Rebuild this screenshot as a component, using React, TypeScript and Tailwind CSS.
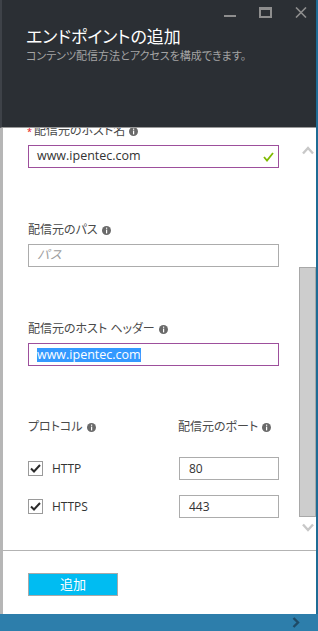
import React from 'react';

const InfoIcon = () => (
  <svg width="9" height="9" viewBox="0 0 9 9" className="inline-block ml-[4px]">
    <circle cx="4.5" cy="4.5" r="4.5" fill="#6a6a6a" />
    <rect x="4" y="1.6" width="1.2" height="1.2" fill="#fff" />
    <rect x="4" y="3.6" width="1.2" height="3.8" fill="#fff" />
  </svg>
);

const Check = () => (
  <svg width="11" height="9" viewBox="0 0 11 9">
    <polyline points="1,4.5 4,7.5 10,1" fill="none" stroke="#2b2b2b" strokeWidth="2" />
  </svg>
);

const Label = ({ text, required }: { text: string; required?: boolean }) => (
  <div className="h-[16px] leading-[16px] text-[12px] text-[#4a4a4a] flex items-center font-['Noto_Sans','Noto_Sans_CJK_JP',sans-serif] [font-feature-settings:'palt']">
    {required && <span className="text-[#e81123] text-[9px] w-[7px] -ml-[1px] mt-[2px]">*</span>}
    {text}
    <InfoIcon />
  </div>
);

const ProtocolRow = ({ name, port }: { name: string; port: string }) => (
  <div className="flex items-center h-[23px]">
    <div className="w-[150px] flex items-center">
      <div className="w-[15px] h-[15px] border border-[#9a9a9a] flex items-center justify-center">
        <Check />
      </div>
      <span className="ml-[9px] text-[12px] text-[#333] font-['Open_Sans',sans-serif]">{name}</span>
    </div>
    <div className="ml-[1px] w-[100px] h-[23px] border border-[#acacac] pl-[9px] text-[12px] leading-[21px] text-[#333] font-['Open_Sans',sans-serif]">
      {port}
    </div>
  </div>
);

export default function App() {
  return (
    <div className="w-[318px] h-[631px] flex flex-col bg-white overflow-hidden">
      <div className="flex-1 flex flex-col border-r-2 border-[#1f6c95]">
        {/* header */}
        <div className="h-[128px] bg-[#2b2f34] border-l-2 border-[#3e4248] border-b border-b-[#9a9a9a] flex flex-col">
          <div className="flex justify-end items-start pt-[7px] pr-[9px] h-[24px]">
            <div className="w-[12px] h-[2px] bg-[#8e8e8e] mt-[8px]" />
            <div className="ml-[23px] w-[13px] h-[11px] border-2 border-t-[3px] border-[#8e8e8e]" />
            <svg width="12" height="11" viewBox="0 0 12 11" className="ml-[23px]">
              <path d="M1 0.5 L11 10.5 M11 0.5 L1 10.5" stroke="#8e8e8e" strokeWidth="1.6" />
            </svg>
          </div>
          <div className="pl-[24px] mt-[3px] text-[17px] leading-[20px] text-white font-['Noto_Sans','Noto_Sans_CJK_JP',sans-serif] [font-feature-settings:'palt']">
            エンドポイントの追加
          </div>
          <div className="pl-[24px] mt-[2px] text-[11px] leading-[14px] text-[#a4a4a4] font-['Noto_Sans','Noto_Sans_CJK_JP',sans-serif] [font-feature-settings:'palt']">
            コンテンツ配信方法とアクセスを構成できます。
          </div>
        </div>

        {/* body */}
        <div className="flex-1 flex border-l-[3px] border-[#b6b6b6] min-h-0">
          <div className="flex-1 flex flex-col">
            <div className="h-[422px] overflow-hidden pl-[25px]">
              <div className="-mt-[5px]">
                <Label text="配信元のホスト名" required />
                <div className="mt-[6px] w-[251px] h-[23px] border border-[#9d4f9c] flex items-center justify-between pl-[8px] pr-[4px]">
                  <span className="text-[12.5px] text-[#333] font-['Open_Sans',sans-serif]">www.ipentec.com</span>
                  <svg width="11" height="10" viewBox="0 0 11 10">
                    <polyline points="1,5 4,8.5 10,1" fill="none" stroke="#7fba00" strokeWidth="1.8" />
                  </svg>
                </div>

                <div className="mt-[54px]">
                  <Label text="配信元のパス" />
                </div>
                <div className="mt-[6px] w-[251px] h-[23px] border border-[#acacac] flex items-center pl-[8px]">
                  <span className="text-[12.5px] italic text-[#a0a0a0] font-['Noto_Sans','Noto_Sans_CJK_JP',sans-serif]">パス</span>
                </div>

                <div className="mt-[54px]">
                  <Label text="配信元のホスト ヘッダー" />
                </div>
                <div className="mt-[6px] w-[251px] h-[23px] border border-[#9d4f9c] flex items-center pl-[8px]">
                  <span className="text-[12.5px] leading-[14px] bg-[#3399ff] text-white font-['Open_Sans',sans-serif]">www.ipentec.com</span>
                </div>

                <div className="mt-[53px] flex">
                  <div className="w-[150px]">
                    <Label text="プロトコル" />
                  </div>
                  <Label text="配信元のポート" />
                </div>
                <div className="mt-[22px]">
                  <ProtocolRow name="HTTP" port="80" />
                </div>
                <div className="mt-[15px]">
                  <ProtocolRow name="HTTPS" port="443" />
                </div>
              </div>
            </div>
          </div>

          {/* scrollbar */}
          <div className="w-[17px] flex flex-col items-center">
            <svg width="12" height="9" viewBox="0 0 12 9" className="mt-[18px]">
              <polyline points="1,7.5 6,2 11,7.5" fill="none" stroke="#c8c8c8" strokeWidth="2.4" />
            </svg>
            <div className="mt-[112px] w-[17px] h-[250px] bg-[#cdcdcd] border border-[#a8a8a8]" />
            <svg width="12" height="9" viewBox="0 0 12 9" className="mt-[6px]">
              <polyline points="1,1.5 6,7 11,1.5" fill="none" stroke="#c8c8c8" strokeWidth="2.4" />
            </svg>
          </div>
        </div>

        {/* footer */}
        <div className="h-[64px] border-l-[3px] border-l-[#b6b6b6] border-t border-t-[#b3b3b3] pl-[25px] pt-[20px]">
          <button className="w-[90px] h-[23px] bg-[#00bcf2] border border-[#a9a9a9] text-white text-[13px] leading-[21px] font-['Noto_Sans','Noto_Sans_CJK_JP',sans-serif]">
            追加
          </button>
        </div>
      </div>

      {/* bottom bar */}
      <div className="h-[17px] bg-[#2d7eab] flex items-center justify-end pr-[18px]">
        <svg width="8" height="11" viewBox="0 0 8 11">
          <polyline points="1.5,1 6,5.5 1.5,10" fill="none" stroke="#1e4a66" strokeWidth="2.4" />
        </svg>
      </div>
    </div>
  );
}
